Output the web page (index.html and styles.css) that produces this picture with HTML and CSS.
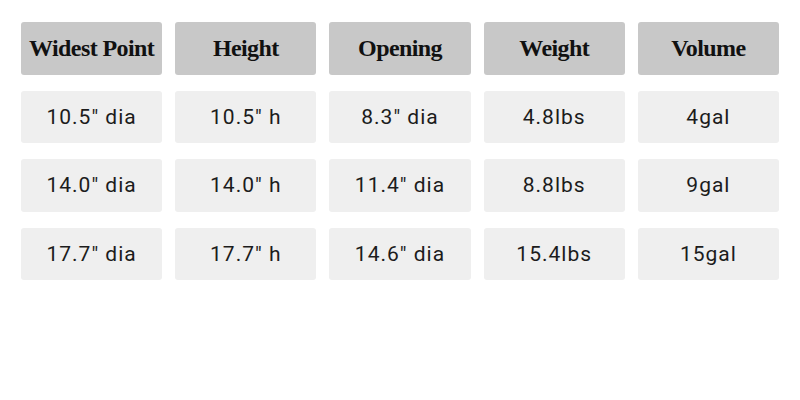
FILE: index.html
```html
<!DOCTYPE html>
<html>
<head>
<meta charset="utf-8">
<link rel="stylesheet" href="styles.css">
</head>
<body>
<div class="table">
  <div class="cell head">Widest Point</div>
  <div class="cell head">Height</div>
  <div class="cell head">Opening</div>
  <div class="cell head">Weight</div>
  <div class="cell head">Volume</div>

  <div class="cell">10.5" dia</div>
  <div class="cell">10.5" h</div>
  <div class="cell">8.3" dia</div>
  <div class="cell">4.8lbs</div>
  <div class="cell">4gal</div>

  <div class="cell">14.0" dia</div>
  <div class="cell">14.0" h</div>
  <div class="cell">11.4" dia</div>
  <div class="cell">8.8lbs</div>
  <div class="cell">9gal</div>

  <div class="cell">17.7" dia</div>
  <div class="cell">17.7" h</div>
  <div class="cell">14.6" dia</div>
  <div class="cell">15.4lbs</div>
  <div class="cell">15gal</div>
</div>
</body>
</html>
```
FILE: styles.css
```css
html, body {
  margin: 0;
  padding: 0;
  background: #ffffff;
}
.table {
  display: grid;
  grid-template-columns: repeat(5, 1fr);
  grid-auto-rows: 52.5px;
  column-gap: 13px;
  row-gap: 16px;
  padding: 22px 21px 0 21px;
}
.cell {
  display: flex;
  align-items: center;
  justify-content: center;
  background: #efefef;
  border-radius: 3px;
  color: #1c1c1c;
  font-family: Roboto, "Liberation Sans", sans-serif;
  font-size: 21px;
  letter-spacing: 1px;
}
.head {
  background: #c8c8c8;
  color: #111111;
  font-family: "Liberation Serif", "DejaVu Serif", serif;
  font-weight: bold;
  font-size: 24px;
  letter-spacing: -0.6px;
}
```
